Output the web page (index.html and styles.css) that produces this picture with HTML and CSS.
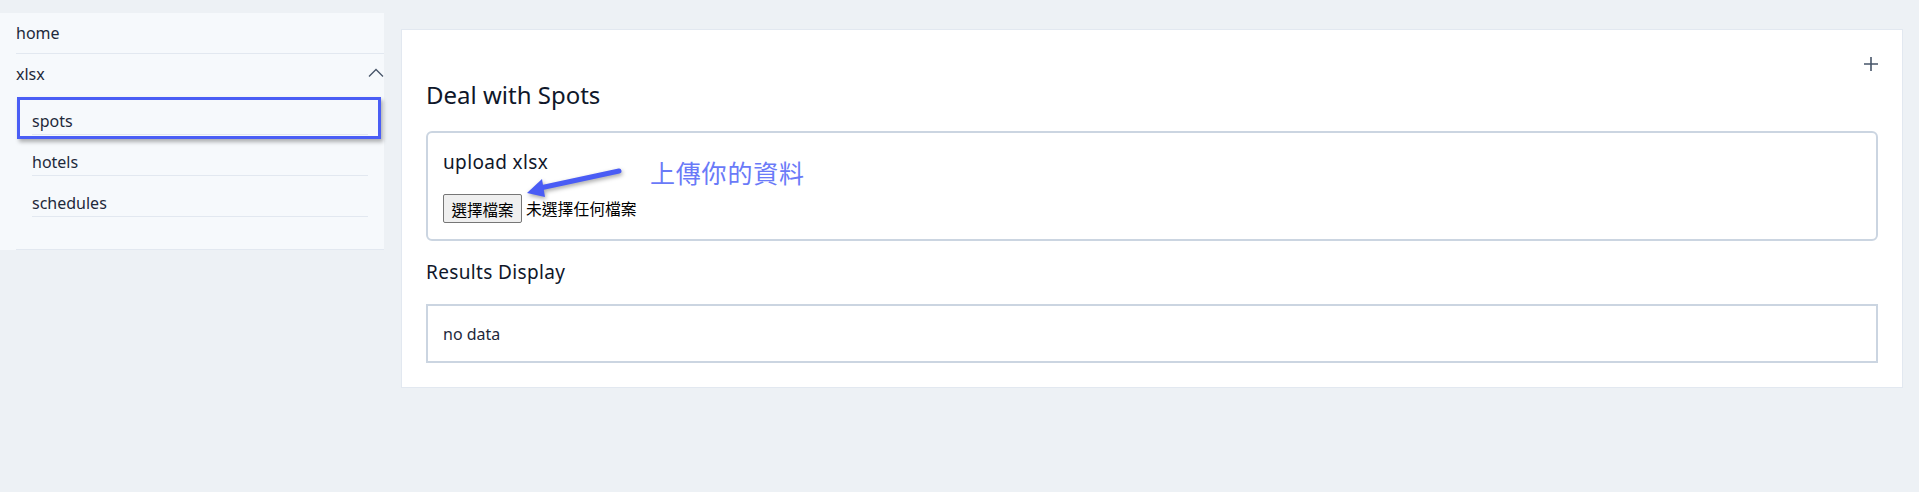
FILE: index.html
```html
<!DOCTYPE html>
<html lang="zh-Hant">
<head>
<meta charset="utf-8">
<title>Deal with Spots</title>
<link rel="stylesheet" href="styles.css">
</head>
<body>
<div class="layout">
  <aside class="sidebar">
    <div class="nav-item">home</div>
    <div class="nav-group">
      <div class="nav-group-head">
        <span>xlsx</span>
        <svg class="chevron" width="16" height="10" viewBox="0 0 16 10"><polyline points="1,8.5 8,1.5 15,8.5" fill="none" stroke="#475569" stroke-width="1.3"/></svg>
      </div>
      <ul class="subnav">
        <li class="sub-item">spots</li>
        <li class="sub-item">hotels</li>
        <li class="sub-item">schedules</li>
      </ul>
    </div>
    <div class="highlight"></div>
  </aside>
  <main class="card">
    <div class="card-top">
      <svg class="plus" width="14" height="14" viewBox="0 0 14 14"><path d="M7 0V14M0 7H14" stroke="#475569" stroke-width="1.6"/></svg>
    </div>
    <h2 class="title">Deal with Spots</h2>
    <section class="upload">
      <h3 class="upload-title">upload xlsx</h3>
      <div class="file-row">
        <button class="file-btn" type="button">選擇檔案</button>
        <span class="file-name">未選擇任何檔案</span>
      </div>
      <svg class="arrow" width="120" height="45" viewBox="0 0 120 45">
        <line x1="99" y1="11" x2="20" y2="28" stroke="#4a5cf5" stroke-width="5" stroke-linecap="round"/>
        <polygon points="7,33 22,19 25,37" fill="#4a5cf5"/>
      </svg>
      <span class="note">上傳你的資料</span>
    </section>
    <h3 class="results-title">Results Display</h3>
    <div class="results">no data</div>
  </main>
</div>
</body>
</html>
```
FILE: styles.css
```css
* { box-sizing: border-box; }

html, body {
  margin: 0;
  padding: 0;
  background: #edf1f5;
  font-family: "Noto Sans", "Noto Sans CJK TC", sans-serif;
  color: #1e293b;
}

.layout {
  display: flex;
  align-items: flex-start;
}

.sidebar {
  position: relative;
  width: 384px;
  flex: none;
  margin-top: 13px;
  padding-left: 16px;
  background: #f6f9fc;
}

.nav-item {
  font-size: 16px;
  line-height: 24px;
  padding: 8px 0;
  border-bottom: 1px solid #e2e8f0;
}

.nav-group {
  border-bottom: 1px solid #e2e8f0;
  padding-bottom: 32px;
}

.nav-group-head {
  display: flex;
  justify-content: space-between;
  align-items: center;
  font-size: 16px;
  line-height: 24px;
  padding: 8px 0;
}

.chevron { display: block; margin-top: -2px; }

.subnav {
  list-style: none;
  margin: 0;
  padding: 0 16px;
}

.sub-item {
  font-size: 16px;
  line-height: 23px;
  padding: 16px 0 1px;
  border-bottom: 1px solid #e2e8f0;
}

.highlight {
  position: absolute;
  left: 17px;
  top: 84px;
  width: 364px;
  height: 42px;
  border: 3px solid #4a5ef5;
  box-shadow: 2px 3px 4px rgba(0, 0, 0, 0.3);
}

.card {
  flex: 1;
  margin: 29px 16px 0 17px;
  background: #ffffff;
  border: 1px solid #e2e8f0;
  padding: 24px;
}

.card-top {
  height: 20px;
  display: flex;
  justify-content: flex-end;
  align-items: center;
}

.plus { display: block; }

.title {
  margin: 3px 0 18px;
  font-size: 24px;
  line-height: 36px;
  font-weight: 400;
  color: #0f172a;
}

.upload {
  position: relative;
  border: 2px solid #cbd5e1;
  border-radius: 6px;
  padding: 16px 15px;
}

.upload-title {
  margin: 0 0 18px;
  font-size: 19px;
  line-height: 27px;
  letter-spacing: 0.35px;
  font-weight: 400;
  color: #0f172a;
}

.file-row {
  display: flex;
  align-items: center;
  height: 29px;
}

.file-btn {
  height: 29px;
  width: 79px;
  padding: 0;
  margin: 0 4px 0 0;
  background: #efefef;
  border: 1px solid #767676;
  border-radius: 2px;
  font-family: "Noto Sans CJK TC", sans-serif;
  font-size: 15.5px;
  color: #000;
}

.file-name {
  font-family: "Noto Sans CJK TC", sans-serif;
  font-size: 15.8px;
  color: #000;
}

.arrow {
  position: absolute;
  left: 92px;
  top: 27px;
  filter: drop-shadow(1px 2px 2px rgba(0, 0, 0, 0.35));
}

.note {
  position: absolute;
  left: 222px;
  top: 27px;
  font-family: "Noto Sans CJK TC", sans-serif;
  font-size: 25px;
  line-height: 25px;
  letter-spacing: 0.8px;
  color: #6a7af8;
}

.results-title {
  margin: 18px 0;
  font-size: 19px;
  line-height: 27px;
  letter-spacing: 0.35px;
  font-weight: 400;
  color: #0f172a;
}

.results {
  border: 2px solid #cbd5e1;
  padding: 16px 15px 15px;
  font-size: 16px;
  line-height: 24px;
}
```
